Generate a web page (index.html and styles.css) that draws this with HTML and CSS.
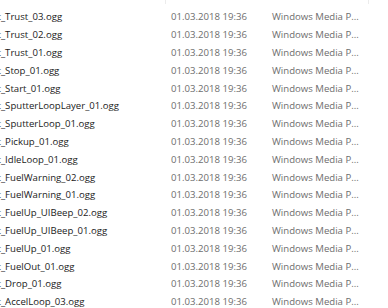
FILE: index.html
```html
<!DOCTYPE html>
<html lang="de">
<head>
  <meta charset="UTF-8" />
  <title>Dateien</title>
  <link rel="stylesheet" href="styles.css">
</head>
<body>
  <div class="header">
    <div class="col col-name"></div>
    <div class="col col-date"></div>
    <div class="col col-type"></div>
  </div>

  <div class="list">
    <div class="row"><span class="name">t_Trust_03.ogg</span><span class="date">01.03.2018 19:36</span><span class="type">Windows Media P...</span></div>
    <div class="row"><span class="name">t_Trust_02.ogg</span><span class="date">01.03.2018 19:36</span><span class="type">Windows Media P...</span></div>
    <div class="row"><span class="name">t_Trust_01.ogg</span><span class="date">01.03.2018 19:36</span><span class="type">Windows Media P...</span></div>
    <div class="row"><span class="name">t_Stop_01.ogg</span><span class="date">01.03.2018 19:36</span><span class="type">Windows Media P...</span></div>
    <div class="row"><span class="name">t_Start_01.ogg</span><span class="date">01.03.2018 19:36</span><span class="type">Windows Media P...</span></div>
    <div class="row"><span class="name">t_SputterLoopLayer_01.ogg</span><span class="date">01.03.2018 19:36</span><span class="type">Windows Media P...</span></div>
    <div class="row"><span class="name">t_SputterLoop_01.ogg</span><span class="date">01.03.2018 19:36</span><span class="type">Windows Media P...</span></div>
    <div class="row"><span class="name">t_Pickup_01.ogg</span><span class="date">01.03.2018 19:36</span><span class="type">Windows Media P...</span></div>
    <div class="row"><span class="name">t_IdleLoop_01.ogg</span><span class="date">01.03.2018 19:36</span><span class="type">Windows Media P...</span></div>
    <div class="row"><span class="name">t_FuelWarning_02.ogg</span><span class="date">01.03.2018 19:36</span><span class="type">Windows Media P...</span></div>
    <div class="row"><span class="name">t_FuelWarning_01.ogg</span><span class="date">01.03.2018 19:36</span><span class="type">Windows Media P...</span></div>
    <div class="row"><span class="name">t_FuelUp_UIBeep_02.ogg</span><span class="date">01.03.2018 19:36</span><span class="type">Windows Media P...</span></div>
    <div class="row"><span class="name">t_FuelUp_UIBeep_01.ogg</span><span class="date">01.03.2018 19:36</span><span class="type">Windows Media P...</span></div>
    <div class="row"><span class="name">t_FuelUp_01.ogg</span><span class="date">01.03.2018 19:36</span><span class="type">Windows Media P...</span></div>
    <div class="row"><span class="name">t_FuelOut_01.ogg</span><span class="date">01.03.2018 19:36</span><span class="type">Windows Media P...</span></div>
    <div class="row"><span class="name">t_Drop_01.ogg</span><span class="date">01.03.2018 19:36</span><span class="type">Windows Media P...</span></div>
    <div class="row"><span class="name">t_AccelLoop_03.ogg</span><span class="date">01.03.2018 19:36</span><span class="type">Windows Media P...</span></div>
  </div>
</body>
</html>
```

FILE: styles.css
```css
body {
  margin: 0;
  background: #fff;
  font-family: 'Open Sans', 'Noto Sans', sans-serif;
  font-size: 9.6px;
  overflow: hidden;
}

/* faint column dividers left over from the header */
.header {
  display: grid;
  grid-template-columns: 166px 101px 102px;
  height: 4px;
}

.header .col {
  border-right: 1px solid #ececec;
}

.header .col-date {
  border-right-color: transparent;
}

.list {
  padding-top: 4px;
}

.row {
  display: grid;
  grid-template-columns: 165px 101px 1fr;
  height: 17.8px;
  align-items: center;
  white-space: nowrap;
}

.name {
  color: #1b1b1b;
  margin-left: -2.5px;
  overflow: hidden;
}

.date,
.type {
  color: #6d6d6d;
  padding-left: 6px;
}
```
